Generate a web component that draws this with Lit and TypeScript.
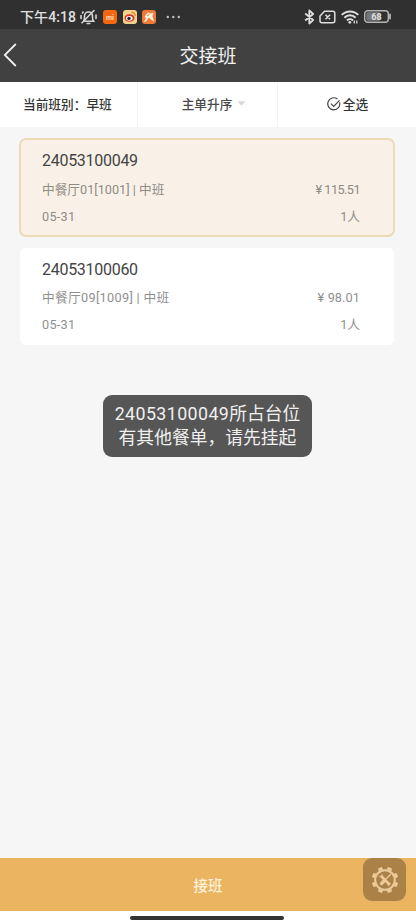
import { LitElement, html, svg, css } from "lit";
import { customElement, property } from "lit/decorators.js";

interface Order {
  no: string;
  place: string;
  shift: string;
  date: string;
  amount: string;
  guests: number;
  selected: boolean;
}

const ORDERS: Order[] = [
  { no: "24053100049", place: "中餐厅01[1001]", shift: "中班", date: "05-31", amount: "115.51", guests: 1, selected: true },
  { no: "24053100060", place: "中餐厅09[1009]", shift: "中班", date: "05-31", amount: "98.01", guests: 1, selected: false },
];

@customElement("status-bar")
class StatusBar extends LitElement {
  static styles = css`
    :host { display: flex; align-items: center; height: 29px; padding: 4px 24px 0 20px; box-sizing: border-box; background: #303030; color: #e0e0e0; }
    .time { width: 57px; font-size: 14px; font-weight: 500; white-space: nowrap; line-height: 20px; letter-spacing: 0.1px; }
    .bell { margin: 0 6px 0 3px; }
    .app { margin-right: 5.500px; }
    .dots { margin-left: 4px; }
    .gap { flex: 1; }
    .wifi { margin: 0 5px; }
    .sim { margin-left: 4px; }
    svg { display: block; flex: none; }
    .level { font: 700 9px Roboto, sans-serif; fill: #e0e0e0; }
    .mi { font: 700 7px Roboto, sans-serif; fill: #ffd9c4; }
  `;
  render() {
    return html`
      <span class="time">下午4:18</span>
      <svg class="bell" width="17" height="16" viewBox="0 0 17 16" fill="none" stroke="#d4d4d4" stroke-width="1.600" stroke-linecap="round">
        <path d="M3.500 12.200h10c-1.300-1.500-1-3-1-5C12.500 4.800 11 3 8.500 3S4.500 4.800 4.500 7.200c0 2 .3 3.500-1 5M7.200 14.500h2.600M14 1.500L2 13.800M1 6.500v3M16 6v3.500M2.500 4l.6-1" />
      </svg>
      <svg class="app" width="14" height="14" viewBox="0 0 14 14">
        <rect width="14" height="14" rx="3" fill="#f4690f" />
        <text class="mi" x="7" y="9.500" text-anchor="middle">mi</text>
      </svg>
      <svg class="app" width="14" height="14" viewBox="0 0 14 14">
        <rect width="14" height="14" rx="3" fill="#f3d28a" />
        <ellipse cx="6.500" cy="8" rx="5" ry="3.800" fill="#d8382a" />
        <ellipse cx="6.300" cy="8.300" rx="3.300" ry="2.400" fill="#fff" />
        <circle cx="6" cy="8.400" r="1.700" fill="#26232d" />
        <path d="M8.500 2.500c2.300-.5 4 1.200 3.500 3.500" fill="none" stroke="#e9862b" stroke-width="1.300" />
      </svg>
      <svg class="app" width="14" height="14" viewBox="0 0 14 14">
        <rect width="14" height="14" rx="3" fill="#ed7a35" />
        <path d="M2.500 6.500L6 2.500l3 1 2.500-1-1 3.500 1.500 5.500-3-2-2-2-3 4-2 .5 2-4z" fill="#fff0df" />
        <path d="M5 6l2.500-1.500" stroke="#ed7a35" />
      </svg>
      <svg class="dots" width="15" height="4" viewBox="0 0 15 4" fill="#c0c0c0">
        <circle cx="1.800" cy="2" r="1.200" /><circle cx="7.300" cy="2" r="1.200" /><circle cx="12.800" cy="2" r="1.200" />
      </svg>
      <span class="gap"></span>
      <svg width="11" height="16" viewBox="0 0 11 16" fill="none" stroke="#dedede" stroke-width="1.800" stroke-linejoin="round">
        <path d="M1.200 4.500l8 6.500-3.900 3.500v-13L9.200 5l-8 6.500" />
      </svg>
      <svg class="sim" width="17" height="14" viewBox="0 0 17 14" fill="none" stroke="#dedede" stroke-width="1.500">
        <path d="M5.500 1.200h8.300a2 2 0 0 1 2 2v7.600a2 2 0 0 1-2 2H3a2 2 0 0 1-2-2V6zM6.500 4.700l4.600 4.600M11.100 4.700L6.500 9.300" />
      </svg>
      <svg class="wifi" width="18" height="14" viewBox="0 0 18 14" fill="none" stroke="#dedede" stroke-width="2">
        <path d="M.7 4.900c4.700-4.700 12-4.700 16.600 0M3.400 7.700c3.200-3.200 8-3.200 11.200 0M6 10.400c1.700-1.600 4.300-1.600 6 0" />
        <circle cx="8.800" cy="12.300" r="1.400" fill="#dedede" stroke="none" />
        <path d="M13.300 10.500v3M15.800 10.500v3" stroke-width="1.200" />
      </svg>
      <svg width="28" height="13" viewBox="0 0 28 13">
        <rect x=".7" y=".7" width="23.600" height="11.600" rx="3" fill="#303030" stroke="#b5b5b5" stroke-width="1.400" />
        <rect x="2.300" y="2.300" width="14" height="8.400" rx="1.500" fill="#777" />
        <path d="M26 4.500v4" stroke="#b5b5b5" stroke-width="1.800" stroke-linecap="round" />
        <text class="level" x="12.500" y="9.800" text-anchor="middle">68</text>
      </svg>
    `;
  }
}

@customElement("order-card")
class OrderCard extends LitElement {
  @property({ attribute: false }) order!: Order;
  static styles = css`
    :host { display: block; }
    .card { box-sizing: border-box; height: 97px; margin: 0 1px; padding: 9px 33px 0 21px; border: 1px solid #fff; border-radius: 5px; background: #fff; color: #8f8f8f; font-size: 12.7px; }
    .selected { height: 99px; margin: 0; padding: 9px 33px 0 21px; border: 2px solid #ebdbb6; border-radius: 7px; background: #f9f1e7; color: #8f8b85; }
    .no { height: 23px; line-height: 24px; font-size: 16px; letter-spacing: -0.28px; color: #444; }
    .selected .no { height: 24px; }
    .row { display: flex; justify-content: space-between; height: 28px; line-height: 28px; white-space: pre; }
    .row.first { height: 30px; line-height: 33px; }
    .row.last { line-height: 27px; }
    .date { letter-spacing: 0.25px; }
    .place { letter-spacing: 0.32px; }
    .amount { letter-spacing: 0.1px; }
    .selected .place { letter-spacing: 0; }
    .selected .amount { letter-spacing: -0.55px; }
  `;
  render() {
    const o = this.order;
    return html`
      <div class="card ${o.selected ? "selected" : ""}">
        <div class="no">${o.no}</div>
        <div class="row first"><span class="place">${o.place} | ${o.shift}</span><span class="amount">¥ ${o.amount}</span></div>
        <div class="row last"><span class="date">${o.date}</span><span>${o.guests}人</span></div>
      </div>
    `;
  }
}

const TEETH = Array.from({ length: 8 }, (_, i) => i * 45 + 22.5);

@customElement("app-root")
class AppRoot extends LitElement {
  static styles = css`
    :host { display: flex; flex-direction: column; position: relative; width: 416px; height: 924px; overflow: hidden; background: #f6f6f6; font-family: Roboto, "Noto Sans CJK SC", sans-serif; }
    .header { display: grid; grid-template-columns: 60px 1fr 60px; align-items: center; height: 53px; background: #414141; color: #f0f0f0; }
    .title { text-align: center; font-size: 19px; line-height: 28px; padding-top: 2px; }
    .back { display: block; margin-left: 3px; }
    .tabs { display: grid; grid-template-columns: 137px 140px 1fr; height: 45px; background: #fff; color: #333; font-size: 12.7px; font-weight: 500; }
    .tab { display: flex; align-items: center; justify-content: center; box-sizing: border-box; padding-bottom: 2px; border-left: 1px solid #f3f3f3; white-space: nowrap; }
    .tab:first-child { border: 0; justify-content: flex-start; padding-left: 23px; }
    .sort { color: #484848; padding-left: 13px; }
    .all { padding-left: 1px; }
    .caret { margin-left: 5px; }
    .check { margin-right: 2px; }
    .list { flex: 1; display: flex; flex-direction: column; gap: 11px; padding: 11px 21px 0 19px; }
    .submit { height: 53px; display: flex; align-items: center; justify-content: center; background: #ebb461; color: #fff2da; font-size: 14.5px; font-weight: 500; }
    .home { height: 13px; display: flex; justify-content: center; align-items: center; background: #fff; }
    .handle { width: 154px; height: 4px; margin: 1px 2px 0 0; border-radius: 2px; background: #333; }
    .toast { position: absolute; left: 103px; top: 395px; width: 209px; height: 62px; box-sizing: border-box; padding-top: 7px; border-radius: 9px; background: #565656; color: #f0f0f0; font-size: 17.8px; line-height: 24px; text-align: center; white-space: nowrap; }
    .num { letter-spacing: 0.42px; }
    .tool { position: absolute; left: 363px; top: 858px; width: 43px; height: 43px; border-radius: 9px; background: #aa8248; display: grid; place-items: center; }
  `;
  render() {
    return html`
      <status-bar></status-bar>
      <div class="header">
        <svg class="back" width="16" height="25" viewBox="0 0 16 25" fill="none" stroke="#eee" stroke-width="1.800">
          <path d="M12.800 1L1.800 12l11 11" />
        </svg>
        <div class="title">交接班</div>
      </div>
      <div class="tabs">
        <div class="tab">当前班别：早班</div>
        <div class="tab sort">
          主单升序
          <svg class="caret" width="9" height="5" viewBox="0 0 9 5"><path d="M.5.3h8l-4 4.500z" fill="#d8d8d8" /></svg>
        </div>
        <div class="tab all">
          <svg class="check" width="14" height="14" viewBox="0 0 14 14" fill="none" stroke="#444" stroke-width="1.200">
            <path d="M12.600 5.300A6 6 0 1 1 10.400 2M4 6.600l2.700 2.700L12.500 3.400" />
          </svg>
          全选
        </div>
      </div>
      <div class="list">${ORDERS.map((o) => html`<order-card .order=${o}></order-card>`)}</div>
      <div class="submit">接班</div>
      <div class="home"><div class="handle"></div></div>
      <div class="toast"><div><span class="num">24053100049</span>所占台位</div><div>有其他餐单，请先挂起</div></div>
      <div class="tool">
        <svg width="28" height="28" viewBox="-14 -14 28 28" fill="none" stroke="#edcb98">
          <circle r="9.800" stroke-width="2" />
          ${TEETH.map((a) => svg`<path d="M-2.500 -10.500L-2 -13.300H2L2.500 -10.500Z" fill="#edcb98" stroke="none" transform="rotate(${a})" />`)}
          <path d="M-3 -3L4 4" stroke-width="2.600" stroke-linecap="round" />
          <path d="M5.500 -5.500L0 0" stroke-width="1.300" stroke-linecap="round" />
          <path d="M-1 1L-3.500 3.500" stroke-width="3.200" stroke-linecap="round" />
          <path d="M-5.500 -3.500L-3 -3L-3 -5.500M5.500 3L4 4L3 5.500" stroke-width="1.500" />
        </svg>
      </div>
    `;
  }
}
